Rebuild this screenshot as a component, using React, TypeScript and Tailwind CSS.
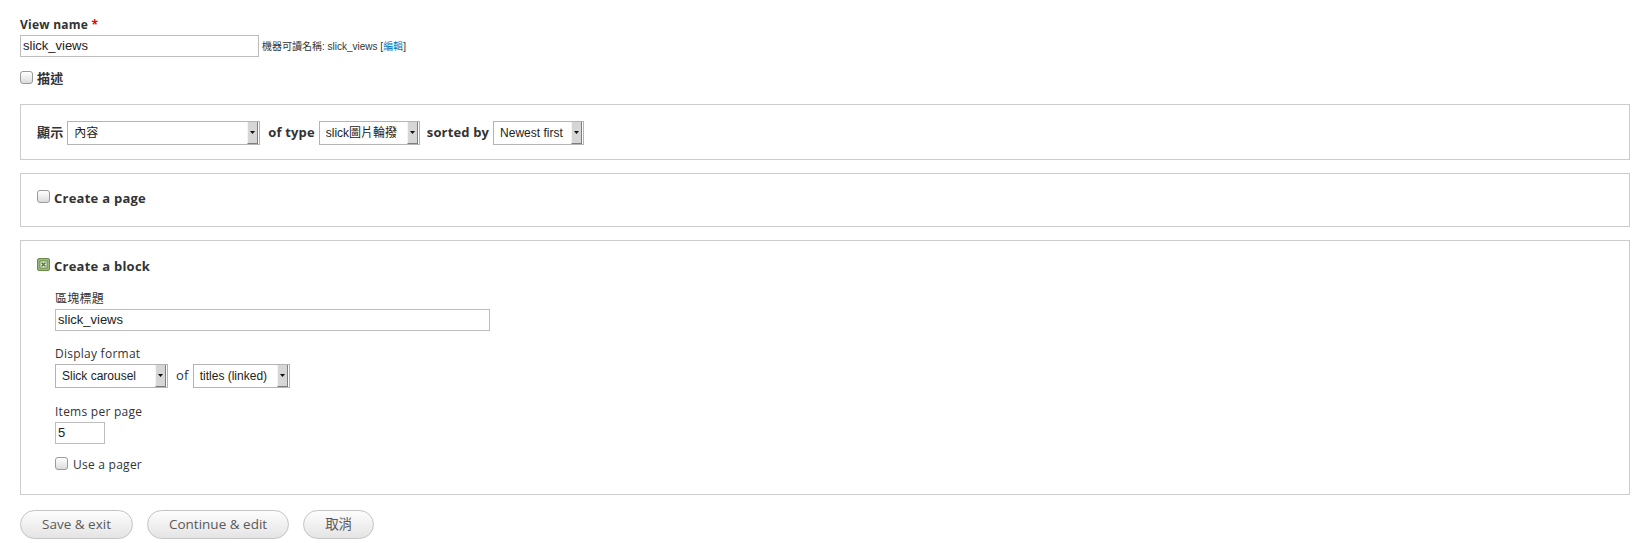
import React from 'react';

const labelFont = { fontFamily: '"Open Sans", "Noto Sans CJK TC", sans-serif' };
const fieldFont = { fontFamily: '"Liberation Sans", "Noto Sans CJK TC", sans-serif' };

function Checkbox({ checked = false }: { checked?: boolean }) {
  if (checked) {
    return (
      <svg width="13" height="13" viewBox="0 0 13 13" className="shrink-0">
        <rect x="0.5" y="0.5" width="12" height="12" rx="1.5" fill="#9ab97c" stroke="#6b8c4e" />
        <rect x="3" y="3" width="7" height="7" fill="#eef4e6" stroke="#5e7f42" strokeWidth="0.8" />
        <path d="M4.5 4.5 L8.5 8.5 M8.5 4.5 L4.5 8.5" stroke="#4f7233" strokeWidth="1.4" />
      </svg>
    );
  }
  return (
    <span className="block w-[13px] h-[13px] shrink-0 rounded-[3px] border border-[#9a9a9a] bg-gradient-to-b from-white to-[#dcdcdc]" />
  );
}

function Select({ width, value }: { width: string; value: string }) {
  return (
    <div className={`flex items-stretch h-[24px] ${width} border border-[#b4b4b4] bg-white tracking-normal`} style={fieldFont}>
      <span className="flex-1 flex items-center pl-[6px] text-[12px] text-[#222] whitespace-nowrap overflow-hidden">{value}</span>
      <span className="w-[11px] mr-[1px] flex items-center justify-center bg-[#d6d6d6] border-r border-b border-[#7d7d7d] border-l border-l-[#f4f4f4]">
        <svg width="5" height="3" viewBox="0 0 5 3">
          <path d="M0 0 H5 L2.5 3 Z" fill="#111" />
        </svg>
      </span>
    </div>
  );
}

function TextInput({ width, value }: { width: string; value: string }) {
  return (
    <div
      className={`flex items-center h-[22px] ${width} border border-[#bdbdbd] bg-white px-[2px] text-[13px] text-[#222] tracking-normal`}
      style={fieldFont}
    >
      {value}
    </div>
  );
}

function Button({ children }: { children: React.ReactNode }) {
  return (
    <button
      className="h-[29px] px-[21px] rounded-full border border-[#c4c4c4] bg-gradient-to-b from-[#fdfdfd] to-[#e4e4e4] text-[13.5px] text-[#5a5a5a]"
      style={labelFont}
    >
      {children}
    </button>
  );
}

export default function App() {
  return (
    <div className="w-[1642px] h-[543px] bg-white pt-[16px] pl-[20px] pr-[12px] text-[#333] tracking-[0.25px]" style={labelFont}>
      {/* View name */}
      <div className="h-[17px] text-[12px] font-bold leading-[17px]">
        View name <span className="text-[#e00]">*</span>
      </div>
      <div className="mt-[2px] flex items-center gap-[3px] tracking-normal">
        <TextInput width="w-[239px]" value="slick_views" />
        <span className="text-[10px] text-[#333]" style={fieldFont}>
          機器可讀名稱: slick_views [<span className="text-[#0074bd]">編輯</span>]
        </span>
      </div>
      <div className="mt-[12px] flex items-start gap-[4px] h-[18px]">
        <span className="mt-[2px]"><Checkbox /></span>
        <span className="text-[13px] font-bold leading-[18px]">描述</span>
      </div>

      {/* Show */}
      <div className="mt-[17px] border border-[#cccccc] pt-[16px] pb-[14px] px-[16px] flex items-center tracking-[0.15px]">
        <span className="text-[13px] font-bold mr-[4px]">顯示</span>
        <Select width="w-[193px]" value="內容" />
        <span className="text-[13px] font-bold ml-[8px] mr-[4px]">of type</span>
        <Select width="w-[101px]" value="slick圖片輪撥" />
        <span className="text-[13px] font-bold ml-[7px] mr-[4px]">sorted by</span>
        <Select width="w-[91px]" value="Newest first" />
      </div>

      {/* Page */}
      <div className="mt-[13px] border border-[#cccccc] pt-[15px] pb-[19px] px-[16px]">
        <div className="flex items-start gap-[4px] h-[18px]">
          <span className="mt-[1px]"><Checkbox /></span>
          <span className="text-[13px] font-bold leading-[18px]">Create a page</span>
        </div>
      </div>

      {/* Block */}
      <div className="mt-[13px] border border-[#cccccc] pt-[16px] pb-[20px] px-[16px]">
        <div className="flex items-start gap-[4px] h-[18px]">
          <span className="mt-[1px]"><Checkbox checked /></span>
          <span className="text-[13px] font-bold leading-[18px]">Create a block</span>
        </div>
        <div className="pl-[18px]">
          <div className="mt-[16px] h-[16px] text-[12px] leading-[16px]">區塊標題</div>
          <div className="mt-[2px]">
            <TextInput width="w-[435px]" value="slick_views" />
          </div>

          <div className="mt-[15px] h-[16px] text-[12px] leading-[16px]">Display format</div>
          <div className="mt-[2px] flex items-center">
            <Select width="w-[113px]" value="Slick carousel" />
            <span className="text-[13px] ml-[8px] mr-[4px]">of</span>
            <Select width="w-[97px]" value="titles (linked)" />
          </div>

          <div className="mt-[16px] h-[16px] text-[12px] leading-[16px]">Items per page</div>
          <div className="mt-[2px]">
            <TextInput width="w-[50px]" value="5" />
          </div>

          <div className="mt-[12px] flex items-start gap-[5px] h-[18px]">
            <span className="mt-[1px]"><Checkbox /></span>
            <span className="text-[12px] leading-[18px]">Use a pager</span>
          </div>
        </div>
      </div>

      {/* Actions */}
      <div className="mt-[15px] flex gap-[14px] tracking-normal">
        <Button>Save &amp; exit</Button>
        <Button>Continue &amp; edit</Button>
        <Button>取消</Button>
      </div>
    </div>
  );
}
